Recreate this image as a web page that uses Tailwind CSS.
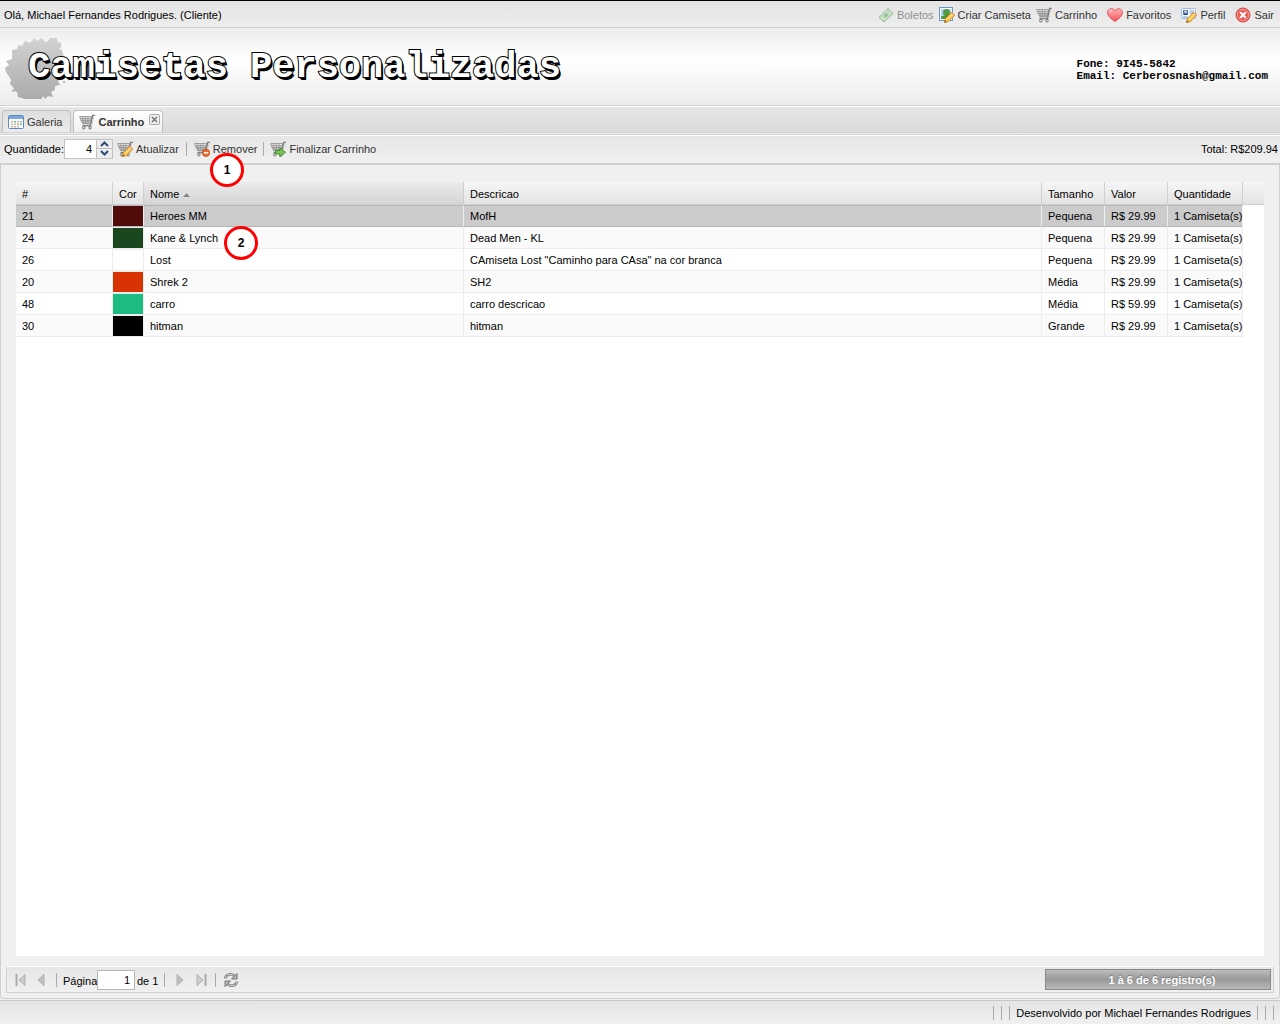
<!DOCTYPE html>
<html lang="pt-BR">
<head>
<meta charset="utf-8">
<title>Camisetas Personalizadas</title>
<script src="https://cdn.jsdelivr.net/npm/@tailwindcss/browser@4"></script>
</head>
<body class="relative flex h-screen flex-col overflow-hidden border-t border-black bg-[#f0f0f0] font-['Liberation_Sans',Arial,sans-serif] text-[11px] leading-4 text-black">

<svg class="absolute size-0" aria-hidden="true">
  <defs>
    <linearGradient id="metal" x1="0" y1="0" x2="0" y2="1"><stop offset="0" stop-color="#f0f0f0"/><stop offset="1" stop-color="#a8a8a8"/></linearGradient>
    <linearGradient id="heartFill" x1="0" y1="0" x2="0" y2="1"><stop offset="0" stop-color="#ffb3b3"/><stop offset="1" stop-color="#f4555a"/></linearGradient>
    <linearGradient id="splashFill" x1="0" y1="0" x2="0" y2="1"><stop offset="0" stop-color="#d2d2d2"/><stop offset="1" stop-color="#a8a8a8"/></linearGradient>
    <symbol id="cart" viewBox="0 0 16 16">
      <path d="M.5 2.500h12.200L11 9.500H3.500z" fill="url(#metal)" stroke="#999" stroke-width=".9"/>
      <path d="M1 4.500h11.500M1.700 6.500h10M3.500 2.500l1.200 7M6.200 2.500l.5 7M9 2.500l-.3 7" stroke="#8f8f8f" stroke-width=".7" fill="none"/>
      <path d="M15.800 1.300h-2.100l-2.200 10.200H3.500" fill="none" stroke="#777" stroke-width="1.300"/>
      <path d="M15 2l-2.200 10.300H5" fill="none" stroke="#ccc" stroke-width=".7"/>
      <circle cx="4.800" cy="13.700" r="1.300" fill="#ddd" stroke="#777"/><circle cx="11" cy="13.700" r="1.300" fill="#ddd" stroke="#777"/>
    </symbol>
    <symbol id="pencil" viewBox="0 0 16 16">
      <path d="M5.500 15.500l.9-3.900 6.300-6.300 3 2.800-6.300 6.400z" fill="#ffc94f" stroke="#c5831f" stroke-width=".9"/>
      <path d="M8 12.500l5.800-5.800" stroke="#fff0a8" stroke-width="1"/>
      <path d="M5.500 15.500l.5-2 1.500 1.500z" fill="#7a4a18"/>
      <path d="M12.200 6.200l.9-.9 2.600 2.600-.9.9z" fill="#f3a07c"/>
    </symbol>
    <symbol id="money" viewBox="0 0 16 16">
      <path d="M1 10.500L10 1.500l5 5-9 8.500z" fill="#8fcb83" stroke="#3d8544" stroke-width=".9"/>
      <path d="M3 10.500L10 3.500l3 3-7 6.500z" fill="none" stroke="#e2f5dd" stroke-width=".8"/>
      <circle cx="8" cy="8.200" r="1.900" fill="#4b9451"/>
    </symbol>
    <symbol id="picture" viewBox="0 0 16 16">
      <rect x=".5" y=".5" width="13" height="13" fill="#fff" stroke="#6c94c4"/>
      <rect x="2" y="2" width="10" height="10" fill="#a9d3f7"/>
      <circle cx="7.500" cy="5.500" r="3.500" fill="#4f9a42"/><path d="M2 9.500q5-2 10 0V12H2z" fill="#4c9b3b"/><path d="M7 8h1.200v3H7z" fill="#7c5a2c"/>
    </symbol>
    <symbol id="heart" viewBox="0 0 16 16">
      <path d="M8 14.500C4 11.800.6 9 .6 5.500.6 1.300 6 .4 8 3.800c2-3.400 7.400-2.500 7.400 1.700C15.400 9 12 11.800 8 14.500z" fill="url(#heartFill)" stroke="#dd4a4f" stroke-width=".9"/>
      <path d="M2.500 5.500q.2-2.300 2.300-2.300" fill="none" stroke="#fff" stroke-opacity=".7"/>
    </symbol>
    <symbol id="card" viewBox="0 0 16 16">
      <rect x=".5" y="1.500" width="14" height="10" rx="1" fill="#f3f8fe" stroke="#a0bbdd"/>
      <rect x="2" y="3" width="5" height="5" fill="#4e82c6"/><circle cx="4.500" cy="4.700" r="1.200" fill="#ffd5a2"/><path d="M2.500 8q2-3.500 4 0z" fill="#24477d"/>
      <path d="M8.500 4h4.500M8.500 6h4M2 10h5" stroke="#7ea6d8"/>
    </symbol>
    <symbol id="stop" viewBox="0 0 16 16">
      <circle cx="8" cy="8" r="7" fill="#ea5f58" stroke="#cf4743"/><circle cx="8" cy="8" r="5.700" fill="none" stroke="#f9aaa4" stroke-width=".8"/>
      <path d="M5.300 5.300l5.400 5.400M10.700 5.300l-5.400 5.400" stroke="#fff" stroke-width="2"/>
    </symbol>
    <symbol id="calendar" viewBox="0 0 16 16">
      <rect x=".5" y="1.500" width="15" height="13" rx="1" fill="#fff" stroke="#5d89c4"/><path d="M1 2h14v3H1z" fill="#79a5dc"/>
      <path d="M3 7h2v1.500H3zM9 7h2v1.500H9zM6 9.500h2V11H6zM12 7h2v1.500h-2z" fill="#9fbce0"/><path d="M6 7h2v1.500H6zM12 9.500h2V11h-2z" fill="#7fb877"/><path d="M3 9.500h2V11H3zM9 9.500h2V11H9zM6 12h2v1.500H6z" fill="#ecab63"/><path d="M3 12h2v1.500H3zM9 12h2v1.500H9z" fill="#9fbce0"/>
    </symbol>
    <symbol id="minus" viewBox="0 0 16 16"><circle cx="12" cy="11.800" r="3.700" fill="#e7692b" stroke="#c64c14" stroke-width=".7"/><path d="M9.800 11.800h4.400" stroke="#fff" stroke-width="1.500"/></symbol>
    <symbol id="go" viewBox="0 0 16 16"><path d="M5.500 9.500h4.300V6.800l5.700 4.500-5.700 4.300v-2.700H5.500z" fill="#7cc45a" stroke="#3b8a27" stroke-width=".9"/></symbol>
  </defs>
</svg>

<!-- User bar -->
<header class="flex h-[27px] shrink-0 items-center justify-between border-b border-[#d0d0d0] bg-linear-to-b from-[#e4e4e4] to-[#ededed] pt-0.5 pr-1.5 pl-1">
  <span>Olá, Michael Fernandes Rodrigues. (Cliente)</span>
  <nav class="flex items-center gap-2.5 text-[#333]">
    <div class="flex gap-[5px]">
      <button disabled class="flex items-center gap-[3px] opacity-50"><svg class="size-4"><use href="#money"/></svg>Boletos</button>
      <button class="flex items-center gap-[3px]"><svg class="size-4"><use href="#picture"/><use href="#pencil"/></svg>Criar Camiseta</button>
      <button class="flex items-center gap-[3px]"><svg class="size-4"><use href="#cart"/></svg>Carrinho</button>
    </div>
    <button class="flex items-center gap-[3px]"><svg class="size-4"><use href="#heart"/></svg>Favoritos</button>
    <button class="flex items-center gap-[3px]"><svg class="size-4"><use href="#card"/><use href="#pencil"/></svg>Perfil</button>
    <button class="flex items-center gap-[3px]"><svg class="size-4"><use href="#stop"/></svg>Sair</button>
  </nav>
</header>

<!-- Brand banner -->
<div class="flex h-[78px] shrink-0 items-center justify-between border-b border-[#d0d0d0] bg-linear-to-b from-[#ececec] via-white via-40% to-[#ececec] pr-3 pl-1">
  <div class="grid items-center">
    <svg class="col-start-1 row-start-1 h-16 w-[62px]" viewBox="0 0 62 64" aria-hidden="true">
      <path d="M1 33l4-3-3-4 6-2 0-9 5-1 1-4 4 1 3-5 5 2 4-5 3 3 5-3 3 4 3-1 2-3 7 0 1 5 3-1 0 5-2 2 3 1 2 7-3 3 2 5-2 3 1 5-2 6-2 2 2 4-5 1 0 4-4 2 2 5-5-1-3 3-2-3-2 4 0 4-2-4-5 1-2 2-3-4-3 1-4-2-4-1-1-5-3-1-1-4-3-3 1-4-3-5-2-3z" fill="url(#splashFill)"/>
      <circle cx="9" cy="56" r="1" fill="#aaa"/><circle cx="60" cy="47" r="1" fill="#aaa"/>
    </svg>
    <h1 class="col-start-1 row-start-1 pl-6 font-['Liberation_Mono',monospace] text-[37px] leading-[52px] font-bold whitespace-pre text-white [-webkit-text-stroke:2px_#000] [paint-order:stroke_fill] [text-shadow:1px_2px_0_#000,2px_3px_0_#000]">Camisetas Personalizadas</h1>
  </div>
  <address class="pt-1.5 font-['Liberation_Mono',monospace] text-[11px] leading-3 font-bold not-italic">
    <p>Fone: 9I45-5842</p>
    <p>Email: Cerberosnash@gmail.com</p>
  </address>
</div>

<!-- Tabs -->
<div class="flex h-[29px] shrink-0 flex-col justify-end border-t border-white bg-linear-to-b from-[#e6e6e6] to-[#dadada]">
  <div class="flex items-end gap-0.5 pl-0.5" role="tablist">
    <button role="tab" class="flex h-[22px] items-center gap-[3px] rounded-t-sm border border-b-0 border-[#c0c0c0] bg-linear-to-b from-[#dedede] to-[#ececec] pr-2 pl-[5px] text-[#333]"><svg class="size-4"><use href="#calendar"/></svg>Galeria</button>
    <div class="flex h-[22px] items-start rounded-t-sm border border-b-0 border-[#c0c0c0] bg-linear-to-b from-white to-[#efefef] pr-0.5 pl-[5px]">
      <button role="tab" aria-selected="true" class="flex h-[22px] items-center gap-[3px] pr-[5px] font-bold text-[#333]"><svg class="size-4"><use href="#cart"/></svg>Carrinho</button>
      <button aria-label="Fechar aba" class="mt-[3px] grid size-[11px] place-items-center rounded-xs border border-[#aaa] bg-[#eee]"><svg class="size-[7px]" viewBox="0 0 7 7"><path d="M1 1l5 5M6 1l-5 5" stroke="#777" stroke-width="1.500"/></svg></button>
    </div>
  </div>
  <div class="h-[3px] border-y border-[#d0d0d0] bg-[#efefef]"></div>
</div>

<!-- Cart toolbar -->
<div class="flex h-[30px] shrink-0 items-center border-t border-b-2 border-t-white border-b-[#d0d0d0] bg-linear-to-b from-[#e6e6e6] to-[#f0f0f0] pr-0.5 pb-0.5 pl-1 text-[#333]">
  <label for="qtd" class="w-[60px] text-black">Quantidade:</label>
  <input id="qtd" value="4" class="h-5 w-[33px] border border-[#c3c3c3] bg-white pr-1 text-right text-black">
  <div class="mr-1 flex h-5 w-4 flex-col border border-l-0 border-[#c3c3c3] bg-[#ececec]">
    <button aria-label="Aumentar" class="grid flex-1 place-items-center border-b border-[#bbb]"><svg class="h-1.5 w-[9px]" viewBox="0 0 9 6"><path d="M1 5l3.500-3.500L8 5" fill="none" stroke="#2d4a7c" stroke-width="2"/></svg></button>
    <button aria-label="Diminuir" class="grid flex-1 place-items-center"><svg class="h-1.5 w-[9px]" viewBox="0 0 9 6"><path d="M1 1l3.500 3.500L8 1" fill="none" stroke="#2d4a7c" stroke-width="2"/></svg></button>
  </div>
  <button class="flex items-center gap-[3px]"><svg class="size-4"><use href="#cart"/><use href="#pencil"/></svg>Atualizar</button>
  <i class="mx-[7px] h-3.5 w-px bg-[#aaa]"></i>
  <button class="flex items-center gap-[3px]"><svg class="size-4"><use href="#cart"/><use href="#minus"/></svg>Remover</button>
  <i class="mx-1.5 h-3.5 w-px bg-[#aaa]"></i>
  <button class="flex items-center gap-[3px]"><svg class="size-4"><use href="#cart"/><use href="#go"/></svg>Finalizar Carrinho</button>
  <span class="ml-auto text-black">Total: R$209.94</span>
</div>

<!-- Cart contents -->
<main class="flex min-h-0 flex-1 flex-col rounded-b-sm border-x border-b border-[#d0d0d0] bg-[#f0f0f0] px-[5px] pb-[5px]">
  <div class="mx-2.5 mt-[17px] mb-2.5 min-h-0 flex-1 bg-white">
    <table class="w-full table-fixed border-separate border-spacing-0 text-left [&_td]:h-[22px] [&_td]:border-r [&_td]:border-b [&_td]:border-[#ededed] [&_td]:pl-1.5 [&_td]:whitespace-nowrap [&_th]:h-[23px] [&_th]:border-r [&_th]:border-b [&_th]:border-[#d0d0d0] [&_th]:pt-0.5 [&_th]:pl-1.5 [&_th]:font-normal">
      <colgroup><col class="w-[97px]"><col class="w-[31px]"><col class="w-[320px]"><col><col class="w-[63px]"><col class="w-[63px]"><col class="w-[75px]"><col class="w-[21px]"></colgroup>
      <thead class="bg-linear-to-b from-[#f6f6f6] to-[#e2e2e2]">
        <tr><th>#</th><th>Cor</th><th class="bg-linear-to-b from-[#ebebeb] to-[#d5d5d5]"><span class="flex items-center gap-1">Nome<svg class="mt-0.5 h-1 w-[7px]" viewBox="0 0 7 4"><path d="M3.500 0L7 4H0z" fill="#888"/></svg></span></th><th>Descricao</th><th>Tamanho</th><th>Valor</th><th>Quantidade</th><th class="border-r-0!"></th></tr>
      </thead>
      <tbody id="itens"></tbody>
    </table>
  </div>

  <div class="flex h-[27px] shrink-0 items-center border border-[#d0d0d0] border-t-white bg-linear-to-b from-[#e6e6e6] to-[#f0f0f0] pr-0.5 pl-2">
    <button disabled aria-label="Primeira página"><svg class="h-3 w-[11px]" viewBox="0 0 11 12"><path d="M1.500 0v12" stroke="#aaa" stroke-width="2"/><path d="M10 .5v11L4 6z" fill="#ccc" stroke="#b0b0b0"/></svg></button>
    <button disabled aria-label="Página anterior" class="ml-[11px]"><svg class="h-3 w-2" viewBox="0 0 8 12"><path d="M7 .5v11L1 6z" fill="#c0c0c0" stroke="#b0b0b0"/></svg></button>
    <i class="mr-1.5 ml-[11px] h-3.5 w-px bg-[#aaa]"></i>
    <label for="pagina" class="w-[34px] pt-0.5">Página</label>
    <input id="pagina" value="1" class="h-5 w-[38px] border border-[#b5b8b8] bg-white pr-1 text-right">
    <span class="w-[23px] pt-0.5 pl-0.5 whitespace-nowrap">de 1</span>
    <i class="mr-[11px] ml-1.5 h-3.5 w-px bg-[#aaa]"></i>
    <button disabled aria-label="Próxima página"><svg class="h-3 w-2" viewBox="0 0 8 12"><path d="M1 .5v11L7 6z" fill="#c0c0c0" stroke="#b0b0b0"/></svg></button>
    <button disabled aria-label="Última página" class="ml-3"><svg class="h-3 w-[11px]" viewBox="0 0 11 12"><path d="M9.500 0v12" stroke="#aaa" stroke-width="2"/><path d="M1 .5v11L7 6z" fill="#ccc" stroke="#b0b0b0"/></svg></button>
    <i class="mr-[7px] ml-2 h-3.5 w-px bg-[#aaa]"></i>
    <button aria-label="Atualizar lista"><svg class="size-4" viewBox="0 0 16 16" fill="none"><path d="M2 6.500C3 2 8.500 1 11.500 4M14 9.500C13 14 7.500 15 4.500 12" stroke="#777" stroke-width="2.600"/><path d="M2 6.500C3 2 8.500 1 11.500 4M14 9.500C13 14 7.500 15 4.500 12" stroke="#ddd" stroke-width="1"/><path d="M14 1.500v5.500H8.500zM2 14.500V9h5.500z" fill="#bbb" stroke="#666" stroke-width=".9"/></svg></button>
    <div class="ml-auto flex h-[21px] w-[226px] items-center justify-center border border-[#888] bg-linear-to-b from-[#bcbcbc] via-[#9a9a9a] to-[#b8b8b8] pl-2 font-bold text-white [text-shadow:0_-1px_1px_#777]">1 à 6 de 6 registro(s)</div>
  </div>
</main>

<!-- Status bar -->
<footer class="mt-px flex h-6 shrink-0 items-center justify-end border-t border-[#c8c8c8] bg-linear-to-b from-[#e4e4e4] to-[#f0f0f0] pr-1.5">
  <div class="mr-1.5 flex gap-[7px]"><i class="h-3.5 w-px bg-[#aaa]"></i><i class="h-3.5 w-px bg-[#aaa]"></i><i class="h-3.5 w-px bg-[#aaa]"></i></div>
  <span>Desenvolvido por Michael Fernandes Rodrigues</span>
  <div class="ml-1.5 flex gap-[7px]"><i class="h-3.5 w-px bg-[#aaa]"></i><i class="h-3.5 w-px bg-[#aaa]"></i><i class="h-3.5 w-px bg-[#aaa]"></i></div>
</footer>

<!-- Step markers over the page -->
<div class="absolute top-[152px] left-[210px] grid size-[34px] place-items-center rounded-full border-[3px] border-[#f00] bg-white text-xs font-bold">1</div>
<div class="absolute top-[225px] left-[224px] grid size-[34px] place-items-center rounded-full border-[3px] border-[#f00] bg-white text-xs font-bold">2</div>

<script>
const itens = [
  [21, '#500b0b', 'Heroes MM', 'MofH', 'Pequena', '29.99'],
  [24, '#1b4720', 'Kane & Lynch', 'Dead Men - KL', 'Pequena', '29.99'],
  [26, '#ffffff', 'Lost', 'CAmiseta Lost "Caminho para CAsa" na cor branca', 'Pequena', '29.99'],
  [20, '#d93303', 'Shrek 2', 'SH2', 'Média', '29.99'],
  [48, '#1dbb82', 'carro', 'carro descricao', 'Média', '59.99'],
  [30, '#000000', 'hitman', 'hitman', 'Grande', '29.99'],
];
const tbody = document.getElementById('itens');
itens.forEach(([id, cor, nome, descricao, tamanho, valor], i) => {
  const tr = tbody.insertRow();
  tr.className = i === 0
    ? 'bg-[#cbcbcb] [&>td:not(:last-child)]:border-y [&>td:not(:last-child)]:border-y-[#a3a3a3]! [&>td:not(:last-child)]:[border-top-style:dotted] [&>td:not(:last-child)]:[border-bottom-style:dotted]'
    : i % 2 ? 'bg-[#fafafa]' : 'bg-white';
  [id, '', nome, descricao, tamanho, 'R$ ' + valor, '1 Camiseta(s)', ''].forEach((texto, c) => {
    const td = tr.insertCell();
    td.textContent = texto;
    if (c === 1) { td.className = 'border-t border-t-[#ededed] bg-clip-padding'; td.style.backgroundColor = cor; }
    if (c === 7) td.className = 'border-0! bg-white';
  });
});
</script>
</body>
</html>
